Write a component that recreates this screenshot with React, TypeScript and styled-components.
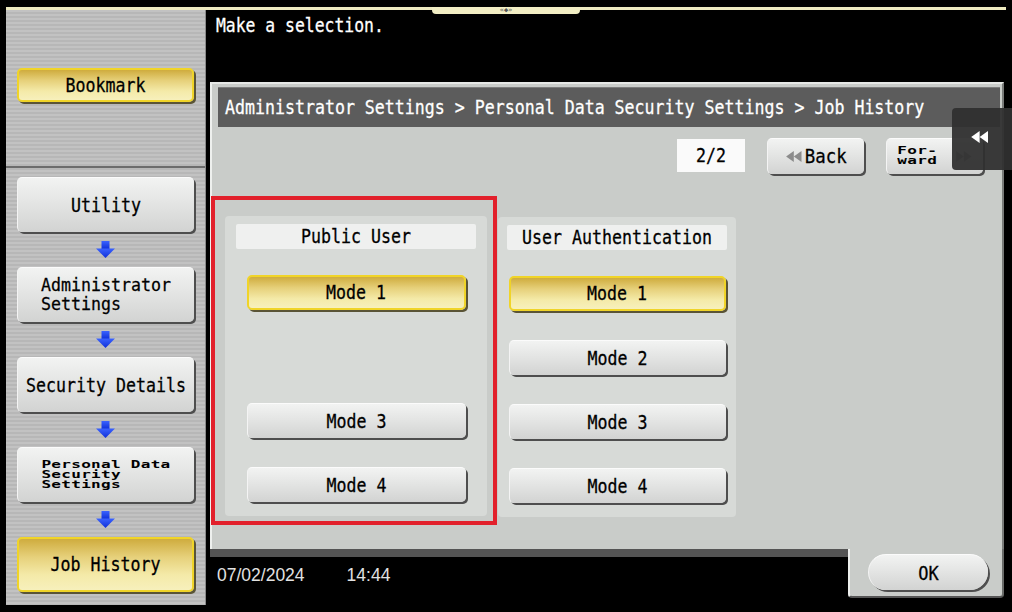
import React from "react";
import styled, { createGlobalStyle, css } from "styled-components";

const GlobalStyle = createGlobalStyle`
  html, body {
    margin: 0;
    padding: 0;
    background: #000;
  }
  * {
    box-sizing: border-box;
  }
`;

const mono = `"DejaVu Sans Mono", "Liberation Mono", monospace`;

const Screen = styled.div`
  position: relative;
  width: 1012px;
  height: 612px;
  background: #000;
  display: flex;
  flex-direction: column;
  overflow: hidden;
  font-family: ${mono};
`;

const TopStrip = styled.div`
  margin: 7px 6px 0 6px;
  height: 3px;
  background: #eeeac0;
  display: flex;
  justify-content: center;
  align-items: flex-start;
`;

const TopTab = styled.div`
  width: 148px;
  height: 7px;
  background: #f2eec4;
  border-radius: 0 0 4px 4px;
  display: flex;
  justify-content: center;
  align-items: center;
  font-size: 7px;
  line-height: 7px;
  color: #555;
`;

const Body = styled.div`
  display: flex;
  padding-left: 6px;
  height: 596px;
`;

const stripes = css`
  background: repeating-linear-gradient(
    to bottom,
    #c2c2c2 0px,
    #c2c2c2 2px,
    #b7b7b7 2px,
    #b7b7b7 4px
  );
`;

const Sidebar = styled.div`
  width: 200px;
  height: 595px;
  display: flex;
  flex-direction: column;
  ${stripes};
  border-right: 1px solid #8a8a8a;
`;

const SidebarTop = styled.div`
  height: 158px;
  padding: 58px 0 0 11px;
  border-bottom: 2px solid #6c6c6c;
`;

const SidebarFlow = styled.div`
  display: flex;
  flex-direction: column;
  padding: 9px 0 0 11px;
`;

// the panel font is tall and narrow, so stretch DejaVu Mono a little
const Label = styled.span`
  display: inline-block;
  transform: scaleY(1.16);
  -webkit-text-stroke: 0.25px currentColor;
`;

const buttonBase = css`
  border-radius: 5px;
  color: #000;
  font-family: ${mono};
  font-size: 16.6px;
  display: flex;
  align-items: center;
  justify-content: center;
`;

const grayFace = css`
  background: linear-gradient(to bottom, #f2f3f2 0%, #e4e5e4 45%, #d2d3d2 100%);
  border-top: 1px solid #fbfbfb;
  border-left: 1px solid #f4f4f4;
  box-shadow: 2px 2px 0 #4e4e4e;
`;

const yellowFace = css`
  background: linear-gradient(to bottom, #cfac3e 0%, #e6d07a 35%, #f4eaa8 70%, #f7f0bc 100%);
  border: 2px solid #f0d428;
  box-shadow: 2px 2px 0 #5a5436;
`;

const SideButton = styled.div<{ $active?: boolean; $tall?: boolean }>`
  ${buttonBase};
  width: 177px;
  height: ${(p) => (p.$tall ? 55 : 34)}px;
  ${(p) => (p.$active ? yellowFace : grayFace)};
`;

const StackText = styled.span`
  display: inline-block;
  text-align: left;
  line-height: 18px;
  transform: scaleY(1.1);
  -webkit-text-stroke: 0.25px currentColor;
`;

const TinyText = styled.span<{ $lines: number }>`
  display: inline-block;
  text-align: left;
  font-weight: bold;
  font-size: 16px;
  line-height: 16px;
  letter-spacing: 0.3px;
  transform: scaleY(0.62);
  margin: ${(p) => -(p.$lines * 3)}px 0;
`;

const ArrowSlot = styled.div`
  width: 177px;
  height: 35px;
  display: flex;
  align-items: center;
  justify-content: center;
`;

const DownArrow = () => (
  <svg width="19" height="17" viewBox="0 0 19 17">
    <defs>
      <linearGradient id="arr" x1="0" y1="0" x2="0" y2="1">
        <stop offset="0" stopColor="#3b63ff" />
        <stop offset="1" stopColor="#0f2fd8" />
      </linearGradient>
    </defs>
    <rect x="5.5" y="0" width="8" height="8" fill="url(#arr)" />
    <polygon points="0,7.5 19,7.5 9.5,17" fill="url(#arr)" />
  </svg>
);

const Main = styled.div`
  margin-left: 4px;
  width: 794px;
  display: flex;
  flex-direction: column;
`;

const Message = styled.div`
  height: 72px;
  padding: 6px 0 0 6px;
  color: #fff;
  font-size: 16.4px;
  line-height: 20px;
`;

const Panel = styled.div`
  height: 467px;
  background: #c9ccc9;
  border-top: 2px solid #e6e8e6;
  border-left: 2px solid #eef0ee;
  border-right: 2px solid #7a7c7a;
  padding: 3px 2px 0 6px;
  display: flex;
  flex-direction: column;
`;

const Header = styled.div`
  height: 40px;
  background: #5c5c5c;
  border-top: 1px solid #7c7c7c;
  color: #fff;
  font-size: 16.6px;
  display: flex;
  align-items: center;
  padding-left: 7px;
  white-space: nowrap;
`;

const Toolbar = styled.div`
  margin-top: 10px;
  height: 37px;
  display: flex;
  align-items: center;
  justify-content: flex-end;
  gap: 22px;
  padding-right: 17px;
`;

const PageBox = styled.div`
  width: 68px;
  height: 33px;
  background: #fafafa;
  display: flex;
  align-items: center;
  justify-content: center;
  font-size: 16.6px;
`;

const NavButton = styled.div`
  ${buttonBase};
  ${grayFace};
  width: 97px;
  height: 36px;
  gap: 2px;
`;

const NavLabel = styled(Label)`
  font-size: 17.4px;
`;

const Groups = styled.div`
  margin: 22px 0 0 -7px;
  display: flex;
  align-items: flex-start;
`;

const Highlight = styled.div`
  border: 4px solid #e2202b;
  padding: 16px 6px 5px 10px;
`;

const Group = styled.div<{ $width: number; $top?: number; $left?: number }>`
  width: ${(p) => p.$width}px;
  height: 300px;
  margin: ${(p) => p.$top ?? 0}px 0 0 ${(p) => p.$left ?? 0}px;
  background: #d7dad7;
  border-radius: 4px;
  padding-top: 8px;
  display: flex;
  flex-direction: column;
  align-items: center;
`;

const GroupLabel = styled.div<{ $width: number }>`
  width: ${(p) => p.$width}px;
  height: 25px;
  background: #eff0ef;
  border-radius: 2px;
  display: flex;
  align-items: center;
  justify-content: center;
  font-size: 16.6px;
  margin-bottom: 26px;
`;

const ModeList = styled.div`
  display: flex;
  flex-direction: column;
  gap: 29px;
`;

const ModeButton = styled.div<{ $width: number; $active?: boolean; $hidden?: boolean }>`
  ${buttonBase};
  width: ${(p) => p.$width}px;
  height: 35px;
  ${(p) => (p.$active ? yellowFace : grayFace)};
  visibility: ${(p) => (p.$hidden ? "hidden" : "visible")};
`;

const Footer = styled.div`
  display: flex;
  height: 50px;
  align-items: flex-start;
`;

const DateArea = styled.div`
  flex: 1;
  height: 50px;
  border-top: 8px solid #545454;
  background: #000;
  display: flex;
  align-items: center;
  gap: 42px;
  padding: 0 0 6px 7px;
  color: #e2e2e2;
  font-family: "Liberation Sans", Arial, sans-serif;
  font-size: 17.5px;
`;

const OkArea = styled.div`
  width: 156px;
  height: 49px;
  background: #c9ccc9;
  border-left: 2px solid #eef0ee;
  border-right: 2px solid #6a6c6a;
  border-bottom: 2px solid #555;
  border-radius: 0 0 4px 4px;
  display: flex;
  justify-content: center;
  padding: 5px 0 0 4px;
`;

const OkButton = styled.div`
  ${buttonBase};
  ${grayFace};
  width: 120px;
  height: 36px;
  border-radius: 18px;
  font-size: 17px;
`;

const SideTab = styled.div`
  position: absolute;
  left: 952px;
  top: 108px;
  width: 60px;
  height: 62px;
  background: rgba(48, 48, 48, 0.94);
  border-radius: 4px 0 0 4px;
  display: flex;
  align-items: center;
  justify-content: center;
  padding: 0 4px 4px 0;
`;

const DoubleLeft = ({ color, size }: { color: string; size: number }) => (
  <svg width={size * 1.6} height={size} viewBox="0 0 16 10">
    <polygon points="8,0 8,10 1,5" fill={color} />
    <polygon points="15,0 15,10 8,5" fill={color} />
  </svg>
);

const DoubleRight = ({ color, size }: { color: string; size: number }) => (
  <svg width={size * 1.6} height={size} viewBox="0 0 16 10">
    <polygon points="1,0 1,10 8,5" fill={color} />
    <polygon points="8,0 8,10 15,5" fill={color} />
  </svg>
);

const sideSteps = [
  { label: "Utility" },
  { label: "Administrator Settings", stacked: ["Administrator", "Settings"] },
  { label: "Security Details" },
  { label: "Personal Data Security Settings", tiny: ["Personal Data", "Security", "Settings"] },
];

const publicModes = [
  { label: "Mode 1", active: true },
  { label: "Mode 2", hidden: true },
  { label: "Mode 3" },
  { label: "Mode 4" },
];

const authModes = [
  { label: "Mode 1", active: true },
  { label: "Mode 2" },
  { label: "Mode 3" },
  { label: "Mode 4" },
];

const App: React.FC = () => {
  return (
    <>
      <GlobalStyle />
      <Screen>
        <TopStrip>
          <TopTab>«◆»</TopTab>
        </TopStrip>
        <Body>
          <Sidebar>
            <SidebarTop>
              <SideButton $active>
                <Label>Bookmark</Label>
              </SideButton>
            </SidebarTop>
            <SidebarFlow>
              {sideSteps.map((step) => (
                <React.Fragment key={step.label}>
                  <SideButton $tall>
                    {step.tiny ? (
                      <TinyText $lines={step.tiny.length}>
                        {step.tiny.map((l) => (
                          <div key={l}>{l}</div>
                        ))}
                      </TinyText>
                    ) : step.stacked ? (
                      <StackText>
                        {step.stacked.map((l) => (
                          <div key={l}>{l}</div>
                        ))}
                      </StackText>
                    ) : (
                      <Label>{step.label}</Label>
                    )}
                  </SideButton>
                  <ArrowSlot>
                    <DownArrow />
                  </ArrowSlot>
                </React.Fragment>
              ))}
              <SideButton $tall $active>
                <Label>Job History</Label>
              </SideButton>
            </SidebarFlow>
          </Sidebar>
          <Main>
            <Message>
              <Label>Make a selection.</Label>
            </Message>
            <Panel>
              <Header>
                <Label>Administrator Settings &gt; Personal Data Security Settings &gt; Job History</Label>
              </Header>
              <Toolbar>
                <PageBox>
                  <Label>2/2</Label>
                </PageBox>
                <NavButton>
                  <DoubleLeft color="#8c8c8c" size={11} />
                  <NavLabel>Back</NavLabel>
                </NavButton>
                <NavButton>
                  <TinyText $lines={2}>
                    <div>For-</div>
                    <div>ward</div>
                  </TinyText>
                  <span style={{ width: 14 }} />
                  <DoubleRight color="#9a9a9a" size={11} />
                </NavButton>
              </Toolbar>
              <Groups>
                <Highlight>
                  <Group $width={262}>
                    <GroupLabel $width={240}>
                      <Label>Public User</Label>
                    </GroupLabel>
                    <ModeList>
                      {publicModes.map((m) => (
                        <ModeButton key={m.label} $width={219} $active={m.active} $hidden={m.hidden}>
                          <Label>{m.label}</Label>
                        </ModeButton>
                      ))}
                    </ModeList>
                  </Group>
                </Highlight>
                <Group $width={238} $top={21} $left={1}>
                  <GroupLabel $width={220}>
                    <Label>User Authentication</Label>
                  </GroupLabel>
                  <ModeList>
                    {authModes.map((m) => (
                      <ModeButton key={m.label} $width={217} $active={m.active}>
                        <Label>{m.label}</Label>
                      </ModeButton>
                    ))}
                  </ModeList>
                </Group>
              </Groups>
            </Panel>
            <Footer>
              <DateArea>
                <span>07/02/2024</span>
                <span>14:44</span>
              </DateArea>
              <OkArea>
                <OkButton>
                  <Label>OK</Label>
                </OkButton>
              </OkArea>
            </Footer>
          </Main>
        </Body>
        <SideTab>
          <DoubleLeft color="#ffffff" size={12} />
        </SideTab>
      </Screen>
    </>
  );
};

export default App;
